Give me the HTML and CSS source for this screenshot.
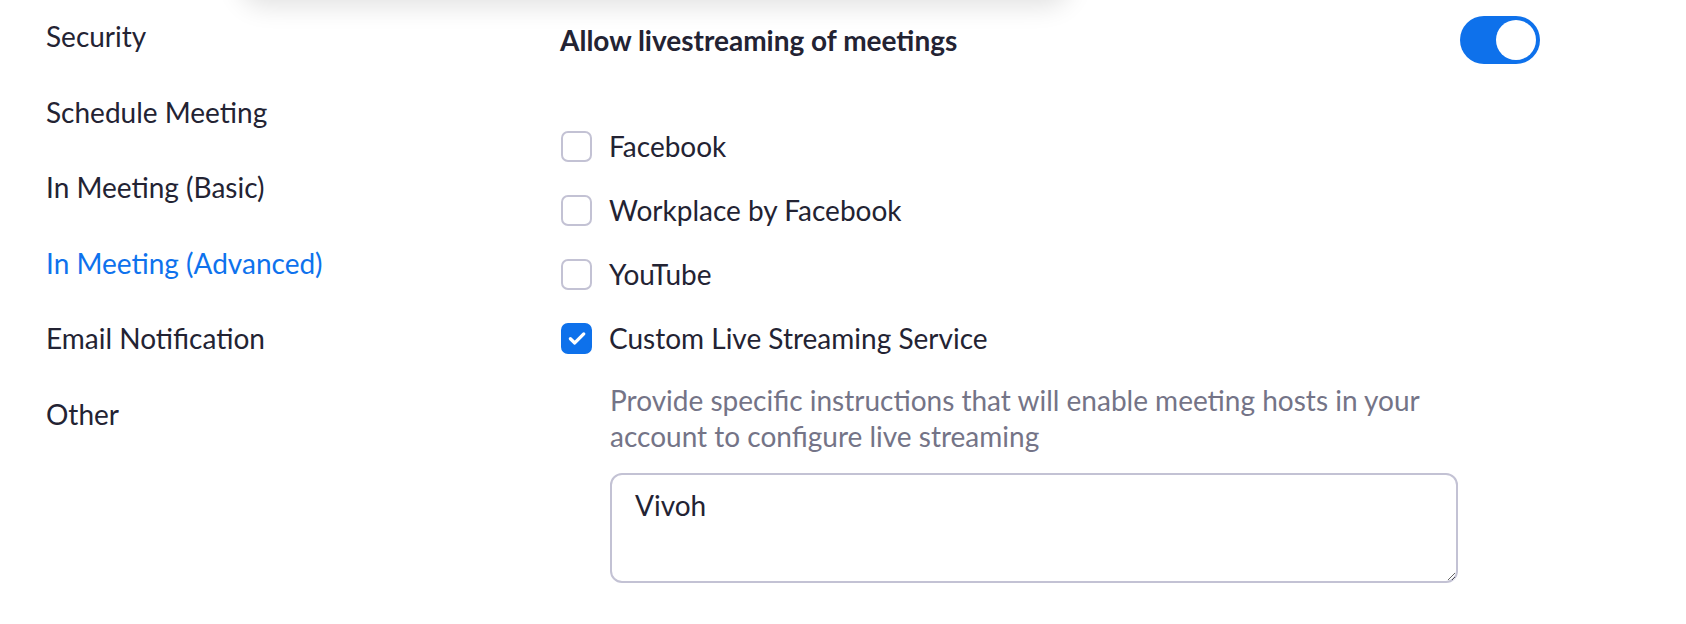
FILE: index.html
```html
<!DOCTYPE html>
<html lang="en">
    <head>
        <meta charset="UTF-8" />
        <title>Meeting Settings</title>
        <link rel="stylesheet" href="styles.css">
    </head>
    <body>
        <div class="popup-shadow"></div>
        <div class="page">
            <nav class="side-nav">
                <a class="nav-item">Security</a>
                <a class="nav-item">Schedule Meeting</a>
                <a class="nav-item">In Meeting (Basic)</a>
                <a class="nav-item active">In Meeting (Advanced)</a>
                <a class="nav-item">Email Notification</a>
                <a class="nav-item">Other</a>
            </nav>

            <main class="setting">
                <div class="setting-head">
                    <h2 class="setting-title">Allow livestreaming of meetings</h2>
                    <span class="toggle on"><span class="knob"></span></span>
                </div>

                <ul class="options">
                    <li class="option"><span class="check"></span>Facebook</li>
                    <li class="option"><span class="check"></span>Workplace by Facebook</li>
                    <li class="option"><span class="check"></span>YouTube</li>
                    <li class="option">
                        <span class="check checked">
                            <svg viewBox="0 0 16 16" width="24" height="24"><path d="M3.6 8.5l2.9 2.8 6-6" fill="none" stroke="#fff" stroke-width="2.2" stroke-linecap="round" stroke-linejoin="round"/></svg>
                        </span>Custom Live Streaming Service
                    </li>
                </ul>

                <div class="custom">
                    <p class="hint">Provide specific instructions that will enable meeting hosts in your account to configure live streaming</p>
                    <textarea class="instructions">Vivoh</textarea>
                </div>
            </main>
        </div>
    </body>
</html>
```

FILE: styles.css
```css
body {
    margin: 0;
    font-family: Lato, "Open Sans", sans-serif;
    color: #232333;
    background: #fff;
    overflow: hidden;
}
.popup-shadow {
    position: absolute;
    top: -70px;
    left: 240px;
    width: 830px;
    height: 70px;
    border-radius: 24px;
    background: #fff;
    box-shadow: 0 6px 26px rgba(0, 0, 0, 0.12);
}
.page {
    display: flex;
    height: 624px;
}
.side-nav {
    width: 514px;
    padding-left: 46px;
    display: flex;
    flex-direction: column;
}
.nav-item {
    font-size: 28px;
    line-height: 75.6px;
    margin-top: -1px;
    margin-bottom: 1px;
    color: #232333;
}
.nav-item.active { color: #0e72ed; }

.setting {
    width: 980px;
    padding-top: 16px;
}
.setting-head {
    display: flex;
    justify-content: space-between;
    align-items: center;
    height: 48px;
}
.setting-title {
    margin: 0;
    font-size: 28px;
    font-weight: bold;
}
.toggle {
    width: 80px;
    height: 48px;
    border-radius: 24px;
    background: #0e71eb;
    display: flex;
    align-items: center;
    justify-content: flex-end;
    padding: 0 4px;
    box-sizing: border-box;
}
.knob {
    width: 40px;
    height: 40px;
    border-radius: 50%;
    background: #fff;
}
.options {
    list-style: none;
    margin: 50px 0 0 1px;
    padding: 0;
}
.option {
    height: 64px;
    display: flex;
    align-items: center;
    gap: 17px;
    font-size: 28px;
}
.check {
    width: 31px;
    height: 31px;
    box-sizing: border-box;
    border: 2px solid #c3c2d4;
    border-radius: 7px;
    display: flex;
    align-items: center;
    justify-content: center;
}
.check.checked {
    background: #0e71eb;
    border-color: #0e71eb;
}
.custom {
    padding-left: 50px;
}
.hint {
    margin: 12px 0 19px;
    max-width: 850px;
    font-size: 28px;
    line-height: 36px;
    color: #747487;
}
.instructions {
    display: block;
    width: 848px;
    height: 110px;
    box-sizing: border-box;
    border: 2px solid #c3c2d4;
    border-radius: 12px;
    padding: 13px 23px;
    font-family: Lato, "Open Sans", sans-serif;
    font-size: 28px;
    color: #232333;
    resize: vertical;
    outline: none;
}
```
